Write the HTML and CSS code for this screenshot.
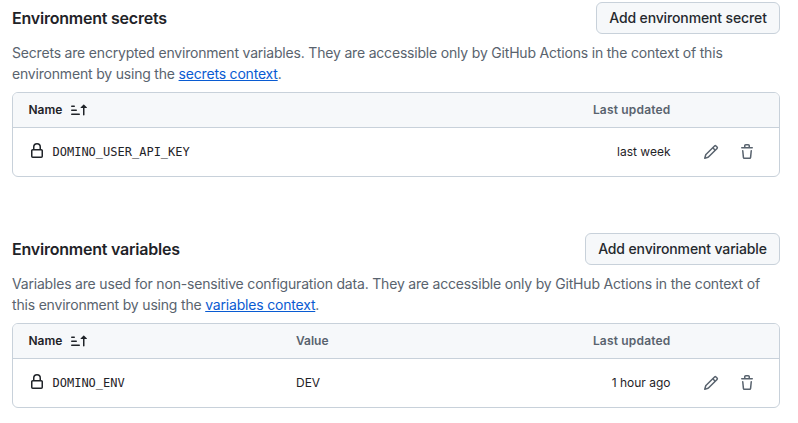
FILE: index.html
```html
<!DOCTYPE html>
<html lang="en">
<head>
<meta charset="utf-8">
<title>Environment secrets and variables</title>
<link rel="stylesheet" href="styles.css">
</head>
<body>
<svg class="sprite" aria-hidden="true">
  <symbol id="lock" viewBox="0 0 16 16"><path d="M4 4a4 4 0 0 1 8 0v2h.25c.966 0 1.75.784 1.75 1.75v5.5A1.75 1.75 0 0 1 12.25 15h-8.5A1.75 1.75 0 0 1 2 13.25v-5.5C2 6.784 2.784 6 3.75 6H4Zm8.25 3.5h-8.5a.25.25 0 0 0-.25.25v5.5c0 .138.112.25.25.25h8.5a.25.25 0 0 0 .25-.25v-5.5a.25.25 0 0 0-.25-.25ZM10.5 6V4a2.5 2.5 0 1 0-5 0v2Z"/></symbol>
  <symbol id="sort" viewBox="0 0 16 16"><path d="m12.927 2.573 3 3A.25.25 0 0 1 15.75 6H13.5v6.75a.75.75 0 0 1-1.5 0V6H9.75a.25.25 0 0 1-.177-.427l3-3a.25.25 0 0 1 .354 0ZM0 12.25a.75.75 0 0 1 .75-.75h7.5a.75.75 0 0 1 0 1.5H.75a.75.75 0 0 1-.75-.75Zm0-4a.75.75 0 0 1 .75-.75h4.5a.75.75 0 0 1 0 1.5H.75A.75.75 0 0 1 0 8.25Zm0-4a.75.75 0 0 1 .75-.75h2.5a.75.75 0 0 1 0 1.5H.75A.75.75 0 0 1 0 4.25Z"/></symbol>
  <symbol id="pencil" viewBox="0 0 16 16"><path d="M11.013 1.427a1.75 1.75 0 0 1 2.474 0l1.086 1.086a1.75 1.75 0 0 1 0 2.474l-8.61 8.61c-.21.21-.47.364-.756.445l-3.251.93a.75.75 0 0 1-.927-.928l.929-3.25c.081-.286.235-.547.445-.758l8.61-8.61Zm.176 4.823L9.75 4.81l-6.286 6.287a.253.253 0 0 0-.064.108l-.558 1.953 1.953-.558a.253.253 0 0 0 .108-.064Zm1.238-3.763a.25.25 0 0 0-.354 0L10.811 3.75l1.439 1.44 1.263-1.263a.25.25 0 0 0 0-.354Z"/></symbol>
  <symbol id="trash" viewBox="0 0 16 16"><path d="M11 1.75V3h2.25a.75.75 0 0 1 0 1.5H2.75a.75.75 0 0 1 0-1.5H5V1.75C5 .784 5.784 0 6.75 0h2.5C10.216 0 11 .784 11 1.75ZM4.496 6.675l.66 6.6a.25.25 0 0 0 .249.225h5.19a.25.25 0 0 0 .249-.225l.66-6.6a.75.75 0 0 1 1.492.149l-.66 6.6A1.748 1.748 0 0 1 10.595 15h-5.19a1.75 1.75 0 0 1-1.741-1.575l-.66-6.6a.75.75 0 1 1 1.492-.15ZM6.5 1.75V3h3V1.75a.25.25 0 0 0-.25-.25h-2.5a.25.25 0 0 0-.25.25Z"/></symbol>
</svg>
<main class="page">
  <section class="group">
    <header class="group-head"><h2 class="title">Environment secrets</h2><button class="btn btn-secret">Add environment secret</button></header>
    <p class="desc">Secrets are encrypted environment variables. They are accessible only by GitHub Actions in the context of this<br>environment by using the <a href="#">secrets context</a>.</p>
    <div class="table">
      <div class="row head">
        <div class="name">Name<svg class="icon sort"><use href="#sort"/></svg></div>
        <div class="value"></div>
        <div class="updated">Last updated</div>
      </div>
      <div class="row">
        <div class="name"><svg class="icon lock"><use href="#lock"/></svg><code>DOMINO_USER_API_KEY</code></div>
        <div class="value"></div>
        <div class="updated">last week</div>
        <div class="actions"><svg class="icon"><use href="#pencil"/></svg><svg class="icon"><use href="#trash"/></svg></div>
      </div>
    </div>
  </section>
  <section class="group">
    <header class="group-head"><h2 class="title">Environment variables</h2><button class="btn btn-variable">Add environment variable</button></header>
    <p class="desc">Variables are used for non-sensitive configuration data. They are accessible only by GitHub Actions in the context of<br>this environment by using the <a href="#">variables context</a>.</p>
    <div class="table">
      <div class="row head">
        <div class="name">Name<svg class="icon sort"><use href="#sort"/></svg></div>
        <div class="value">Value</div>
        <div class="updated">Last updated</div>
      </div>
      <div class="row">
        <div class="name"><svg class="icon lock"><use href="#lock"/></svg><code>DOMINO_ENV</code></div>
        <div class="value">DEV</div>
        <div class="updated">1 hour ago</div>
        <div class="actions"><svg class="icon"><use href="#pencil"/></svg><svg class="icon"><use href="#trash"/></svg></div>
      </div>
    </div>
  </section>
</main>
</body>
</html>
```
FILE: styles.css
```css
* { box-sizing: border-box; }
body { margin: 0; background: #fff; color: #1f2328; font: 14px/21px Inter, "Liberation Sans", sans-serif; overflow: hidden; }
.sprite { display: none; }
.page { display: flex; flex-direction: column; gap: 56px; padding: 2px 18px 0 12px; }
.group-head { display: flex; justify-content: space-between; align-items: center; height: 32px; }
.title { margin: 0; font-size: 16px; font-weight: 600; line-height: 24px; letter-spacing: -.22px; }
.btn { height: 32px; padding: 0; border: 1px solid #c8d1da; border-radius: 6px; background: #f6f8fa; color: #25292e; font: 500 14px/20px Inter, sans-serif; letter-spacing: -.13px; white-space: nowrap; }
.btn-secret { width: 184px; }
.btn-variable { width: 195px; }
.desc { margin: 8px 0; color: #59636e; letter-spacing: -.19px; white-space: nowrap; }
.desc a { color: #095bd2; text-decoration: underline; }
.table { height: 85px; border: 1px solid #c8d1da; border-radius: 6px; overflow: hidden; font-size: 12px; line-height: 18px; }
.row { display: grid; grid-template-columns: 267.5px 200px 174.5px 1fr; align-items: center; height: 48px; padding-left: 15.5px; }
.head { height: 35px; background: #f6f8fa; border-bottom: 1px solid #c8d1da; color: #59636e; font-weight: 600; }
.name { display: flex; align-items: center; color: #1f2328; }
.head .updated { letter-spacing: .18px; }
.updated { text-align: right; }
.icon { width: 16px; height: 16px; fill: currentColor; flex: none; }
.sort { margin-left: 8.5px; }
.lock { margin-right: 8px; position: relative; top: -1px; }
code { font: 12px/18px "DejaVu Sans Mono", monospace; }
.actions { display: flex; gap: 20px; padding-left: 32.5px; color: #59636e; }
```
